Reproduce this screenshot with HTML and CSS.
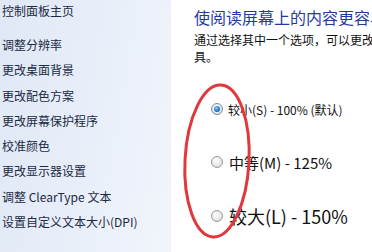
FILE: index.html
```html
<!DOCTYPE html>
<html lang="zh-CN">
<head>
<meta charset="utf-8">
<link rel="stylesheet" href="styles.css">
</head>
<body>
<div class="window">
  <nav class="sidebar">
    <div class="home">控制面板主页</div>
    <ul class="links">
      <li>调整分辨率</li>
      <li>更改桌面背景</li>
      <li>更改配色方案</li>
      <li>更改屏幕保护程序</li>
      <li>校准颜色</li>
      <li>更改显示器设置</li>
      <li>调整 ClearType 文本</li>
      <li>设置自定义文本大小(DPI)</li>
    </ul>
  </nav>
  <main class="content">
    <h1 class="title">使阅读屏幕上的内容更容易</h1>
    <p class="desc"><span class="line">通过选择其中一个选项，可以更改屏幕上的文本大小以及其他项。要暂时放大部分屏幕项，请使用放大镜工</span><span class="line">具。</span></p>
    <div class="options">
      <div class="option small"><span class="radio checked"></span><span>较小(S) - 100% (默认)</span></div>
      <div class="option medium"><span class="radio"></span><span>中等(M) - 125%</span></div>
      <div class="option large"><span class="radio"></span><span>较大(L) - 150%</span></div>
    </div>
  </main>
  <svg class="mark" width="372" height="252" viewBox="0 0 372 252">
    <ellipse cx="217" cy="161" rx="32" ry="76" transform="rotate(3 217 161)" fill="none" stroke="#e0383c" stroke-width="3"/>
  </svg>
</div>
</body>
</html>
```
FILE: styles.css
```css
* { box-sizing: border-box; }
html, body { margin: 0; padding: 0; }
body {
  width: 372px;
  height: 252px;
  overflow: hidden;
  background: #fff;
  font-family: "Noto Sans CJK SC", "Noto Sans", sans-serif;
  color: #1a1a1a;
}
.window {
  position: relative;
  display: grid;
  grid-template-columns: 171px 1fr;
  height: 252px;
}
.sidebar {
  background: linear-gradient(100deg, #dfe8f6 0%, #e9eff9 55%, #f1f5fb 100%);
  padding: 2px 0 0 2px;
  font-size: 12px;
  color: #1b2a44;
}
.home {
  line-height: 17px;
  margin-bottom: 13px;
}
.links {
  list-style: none;
  margin: 0;
  padding: 0;
}
.links li {
  line-height: 25.3px;
  white-space: nowrap;
}
.content {
  padding: 6px 0 0 23px;
  overflow: hidden;
  white-space: nowrap;
}
.title {
  margin: 0;
  font-size: 16px;
  font-weight: normal;
  color: #1f3c9c;
  line-height: 22px;
}
.desc {
  margin: 3px 0 0;
  font-size: 12px;
  line-height: 17px;
  color: #111;
}
.line { display: block; }
.options {
  padding: 0 0 0 17px;
}
.option {
  display: flex;
  align-items: center;
  gap: 5px;
  color: #111;
}
.option.small { font-size: 12px; height: 20px; margin-top: 34px; }
.option.medium { font-size: 15px; height: 24px; margin-top: 31px; }
.option.large { font-size: 18px; height: 28px; margin-top: 28px; }
.radio {
  flex: none;
  width: 12px;
  height: 12px;
  border-radius: 50%;
  border: 1px solid #9a9a9a;
  background: radial-gradient(circle at 40% 35%, #ffffff 0%, #e6e6e6 60%, #cfcfcf 100%);
  position: relative;
}
.option.medium .radio, .option.large .radio { margin-right: 1px; }
.radio.checked {
  border-color: #6c8eb5;
}
.radio.checked::after {
  content: "";
  position: absolute;
  left: 2px;
  top: 2px;
  width: 6px;
  height: 6px;
  border-radius: 50%;
  background: radial-gradient(circle at 40% 35%, #8fd0ff 0%, #2b7fd0 50%, #10427f 100%);
}
.mark {
  position: absolute;
  left: 0;
  top: 0;
  pointer-events: none;
}
```
